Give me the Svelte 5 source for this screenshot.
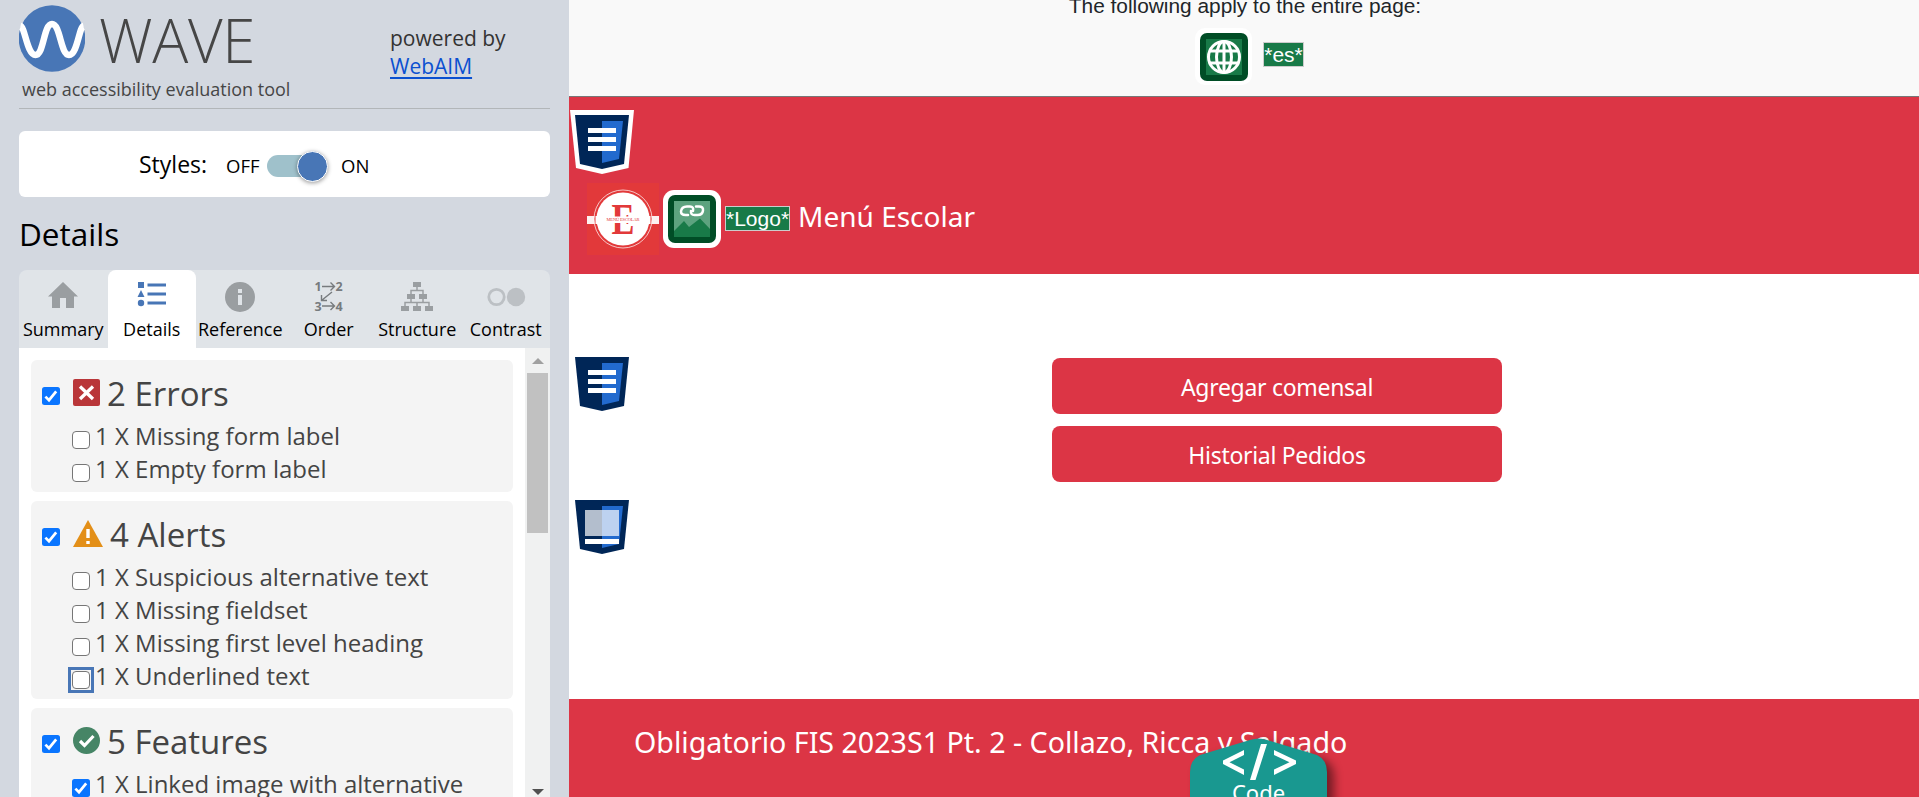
<script>
  const tabs = ['Summary', 'Details', 'Reference', 'Order', 'Structure', 'Contrast'];
  const groups = [
    { kind: 'error', title: '2 Errors', items: [{ t: '1 X Missing form label' }, { t: '1 X Empty form label' }] },
    {
      kind: 'alert',
      title: '4 Alerts',
      items: [
        { t: '1 X Suspicious alternative text' },
        { t: '1 X Missing fieldset' },
        { t: '1 X Missing first level heading' },
        { t: '1 X Underlined text', focus: true }
      ]
    },
    { kind: 'feature', title: '5 Features', items: [{ t: '1 X Linked image with alternative', on: true }] }
  ];
</script>

{#snippet check(on, focus)}
  <span class="box" class:on class:focus>
    {#if on}
      <svg viewBox="0 0 18 18" width="18" height="18"><path d="M3.4 9.6 7 13.2 14.2 4.4" fill="none" stroke="#fff" stroke-width="2.7" /></svg>
    {/if}
  </span>
{/snippet}

{#snippet shield(kind)}
  <svg viewBox="0 0 64 64" width="64" height="64">
    {#if kind === 'halo'}<path d="M0 0H64L58.500 58 32 64 6 58Z" fill="#fff" />{/if}
    <path d="M5 5H59L54 54 32 59 10 54Z" fill="#002657" />
    <path d="M32 11H53L49 49 32 53Z" fill="#226ace" />
    {#if kind === 'footer'}
      <path d="M15 15H49V41H15Z" fill="#fff" fill-opacity=".7" />
      <path d="M15 44H49V49H15Z" fill="#fff" />
    {:else}
      <path d="M18 18H46V23H18ZM18 27H46V32H18ZM18 36H46V41H18Z" fill="#fff" />
    {/if}
  </svg>
{/snippet}

<div class="app">
  <aside>
    <header>
      <div class="brand">
        <div class="mark">
          <svg viewBox="0 0 66 68" width="66" height="68">
            <circle cx="33" cy="33.500" r="33.300" fill="#4876b6" />
            <path d="M1.500 21C6 22 8 50 16.500 50S24.500 19 33 19 41.500 50 50 50 60 22 64.500 21" fill="none" stroke="#fff" stroke-width="6.500" />
          </svg>
          <span class="name">WAVE</span>
        </div>
        <div class="tag">web accessibility evaluation tool</div>
      </div>
      <div class="power">powered by<br /><a href="#top">WebAIM</a></div>
    </header>
    <section class="styles">
      <span class="lbl">Styles:</span>
      <span class="off">OFF</span>
      <span class="switch"><i></i></span>
      <span class="on-lbl">ON</span>
    </section>
    <h2>Details</h2>
    <nav>
      {#each tabs as tab}
        <div class="tab" class:active={tab === 'Details'}>
          <svg viewBox="0 0 40 36" width="40" height="36">
            {#if tab === 'Summary'}
              <path d="M20 4 35 18.500H31V30H23V20H17V30H9V18.500H5Z" fill="#9a9ea1" />
            {:else if tab === 'Details'}
              <g fill="#4876b6"><path d="M6 4H12V10H6ZM9 12 12.500 19H5.500Z" /><circle cx="9" cy="25" r="3.200" /><path d="M15.500 5.500H34V8.500H15.500ZM15.500 14.500H34V17.500H15.500ZM15.500 23.500H34V26.500H15.500Z" /></g>
            {:else if tab === 'Reference'}
              <circle cx="20" cy="19" r="15" fill="#9a9ea1" />
              <path d="M18 11H22V15H18ZM18 17H22V27H18Z" fill="#e0e4e8" />
            {:else if tab === 'Order'}
              <g fill="#777b7e" font-family="Open Sans" font-weight="700" font-size="12.500"><text x="5.500" y="13">1</text><text x="26.500" y="13">2</text><text x="5.500" y="32.500">3</text><text x="26.500" y="32.500">4</text></g>
              <path d="M13 8.500H25.500M21.500 4.500 25.500 8.500 21.500 12.500M23 14 12.500 22.500M12.500 17V22.500H18M13 28H25.500M21.500 24 25.500 28 21.500 32" fill="none" stroke="#777b7e" stroke-width="1.400" />
            {:else if tab === 'Structure'}
              <path d="M16 4H24V9H16ZM10 16H18V21H10ZM22 16H30V21H22ZM4 28H12V33H4ZM16 28H24V33H16ZM28 28H36V33H28Z" fill="#9a9ea1" />
              <path d="M20 9V12.500M14 17V12.500H26V17M14 21V24.500M26 21V24.500M8 29V24.500H32V29M20 29V24.500" fill="none" stroke="#9a9ea1" stroke-width="1.500" />
            {:else}
              <circle cx="10.500" cy="19" r="7.700" fill="none" stroke="#bcc0c4" stroke-width="2.800" /><circle cx="30" cy="19" r="9.200" fill="#bcc0c4" />
            {/if}
          </svg>
          <span>{tab}</span>
        </div>
      {/each}
    </nav>
    <div class="panel">
      <div class="list">
        {#each groups as g}
          <section class="group">
            <div class="head">
              {@render check(true)}
              <svg class="gi {g.kind}" viewBox="0 0 27 27" height="27" width="27">
                {#if g.kind === 'error'}
                  <rect width="27" height="27" rx="2" fill="#b93639" /><path d="M7 7.500 20 20M20 7.500 7 20" stroke="#fff" stroke-width="3.300" />
                {:else if g.kind === 'alert'}
                  <path d="M15 0 30 27H0Z" fill="#e38f18" /><path d="M13.300 9H16.700V18H13.300ZM13.300 21H16.700V24H13.300Z" fill="#fff" />
                {:else}
                  <circle cx="13.500" cy="13.500" r="13.500" fill="#468566" /><path d="M7 14 11.500 18.500 20.500 9" fill="none" stroke="#fff" stroke-width="3.200" />
                {/if}
              </svg>
              <h3>{g.title}</h3>
            </div>
            {#each g.items as it}
              <div class="item">{@render check(it.on, it.focus)}<span>{it.t}</span></div>
            {/each}
          </section>
        {/each}
      </div>
      <div class="scroll"><i class="up"></i><i class="thumb"></i><i class="down"></i></div>
    </div>
  </aside>

  <main>
    <div class="notice">
      <p>The following apply to the entire page:</p>
      <div class="lang">
        <svg viewBox="0 0 58 58" width="58" height="58">
          <rect width="57" height="57" rx="10" fill="#fff" /><rect x="5" y="5" width="48" height="48" rx="7" fill="#004d26" /><rect x="11" y="11" width="36" height="36" fill="#187a48" />
          <g fill="none" stroke="#fff" stroke-width="3"><circle cx="29" cy="29" r="15.500" /><ellipse cx="29" cy="29" rx="7.500" ry="15.500" /><path d="M29 13.500V44.500M15 23H43M15 35H43" /></g>
        </svg>
        <span class="alt">*es*</span>
      </div>
    </div>
    <div class="bar">
      <span class="pin first">{@render shield('halo')}</span>
      <svg class="logo" viewBox="0 0 72 72" width="72" height="72">
        <rect width="72" height="72" fill="#e2393a" />
        <path d="M0 33H72V41H0Z" fill="#fff" fill-opacity=".93" />
        <circle cx="36" cy="36" r="29" fill="#e2393a" stroke="#fff" stroke-opacity=".7" stroke-width="1" />
        <circle cx="36" cy="36" r="26.500" fill="#fff" />
        <path d="M8.500 33H63.500V41H8.500Z" fill="#fff" />
        <text x="36" y="50.500" text-anchor="middle" font-family="Liberation Serif" font-weight="700" font-size="44" textLength="23" lengthAdjust="spacingAndGlyphs" fill="#e2393a">E</text>
        <path d="M19 33.500H54V40H19Z" fill="#fff" />
        <text x="36" y="38.300" text-anchor="middle" font-family="Liberation Serif" font-size="4.500" textLength="33" fill="#e2393a">MENÚ ESCOLAR</text>
      </svg>
      <svg class="pic" viewBox="0 0 58 58" width="58" height="58">
        <rect width="58" height="58" rx="11" fill="#fff" /><rect x="5" y="5" width="48" height="48" rx="7" fill="#004d26" />
        <rect x="11" y="11" width="36" height="36" fill="#5da37f" />
        <path d="M11 41 21 31 26 37 37 28.500 47 39V47H11Z" fill="#187a48" />
        <path d="M25 25H22.500Q18 25 18 21.500 18.500 16.500 24 16.500H27Q31 16.500 30 21M33 16.500H36Q40.500 16.500 40 20.500 39.500 25 34.500 25H31.500Q27.500 25 28 21" fill="none" stroke="#fff" stroke-width="2.500" stroke-linecap="round" />
      </svg>
      <span class="alt">*Logo*</span>
      <span class="title">Menú Escolar</span>
    </div>
    <div class="content">
      <span class="pin second">{@render shield('plain')}</span>
      <span class="pin third">{@render shield('footer')}</span>
      <button class="b1">Agregar comensal</button>
      <button class="b2">Historial Pedidos</button>
    </div>
    <footer><span>Obligatorio FIS 2023S1 Pt. 2 - Collazo, Ricca y Salgado</span></footer>
    <div class="code">
      <svg viewBox="0 0 137 70" width="137" height="70">
        <path d="M0 70V34Q0 22 10 17L60 2Q68.500-1 77 2L127 17Q137 22 137 34V70Z" fill="#199890" />
        <path d="M54 12 33 22.500V26L54 37V31.500L39.500 24.200 54 17ZM71 6H77L65.500 42H60ZM84 12 106 22.500V26L84 37V31.500L99.500 24.200 84 17Z" fill="#fff" />
      </svg>
      <span>Code</span>
    </div>
  </main>
</div>

<style>
  :global(body) { margin: 0; overflow: hidden; }
  * { box-sizing: border-box; }
  .app { display: flex; width: 1919px; height: 797px; overflow: hidden; background: #fff; font-family: 'Open Sans', 'Noto Sans', sans-serif; }
  aside { width: 569px; height: 797px; padding: 0 19px; background: #d3d8e0; display: flex; flex-direction: column; flex: none; }
  header { height: 109px; border-bottom: 1px solid #b2b6b9; display: flex; flex: none; }
  .brand { width: 371px; padding-top: 5px; color: #464646; }
  .mark { display: flex; height: 68px; }
  .mark svg { display: block; }
  .name { font-weight: 300; font-size: 60px; line-height: 68px; margin: 1px 0 0 14px; letter-spacing: -0.3px; }
  .tag { font-size: 18px; line-height: 24px; margin: 4px 0 0 3px; white-space: nowrap; }
  .power { font-size: 21px; line-height: 28px; padding-top: 24px; color: #333; }
  a { color: #0b50d0; text-underline-offset: 3px; }
  .styles { margin-top: 22px; height: 66px; flex: none; background: #fff; border-radius: 6px; display: flex; align-items: center; padding-left: 120px; }
  .lbl { font-size: 23px; width: 87px; }
  .off, .on-lbl { font-size: 18.500px; padding-top: 2px; }
  .off { width: 41px; }
  .switch { width: 58px; height: 22px; border-radius: 11px; background: #9fc1cb; display: flex; justify-content: flex-end; align-items: center; margin-top: 4px; }
  .switch i { width: 31px; height: 31px; border-radius: 50%; background: #4876b6; border: 1px solid #fff; box-shadow: 0 1px 4px #0006; margin-right: -3px; flex: none; }
  .on-lbl { margin-left: 16px; }
  h2 { margin: 13px 0 0; height: 60px; line-height: 48px; font-size: 31.500px; font-weight: 400; }
  nav { display: flex; height: 78px; flex: none; background: #e0e4e8; border-radius: 8px 8px 0 0; }
  .tab { width: 88.500px; padding-top: 8px; display: flex; flex-direction: column; align-items: center; font-size: 18px; line-height: 30px; border-radius: 8px 8px 0 0; }
  .tab.active { background: #fff; }
  .panel { height: 449px; flex: none; background: #fff; display: flex; overflow: hidden; }
  .list { width: 506px; padding: 12px 12px 0; }
  .group { background: #f4f4f4; border-radius: 6px; margin-bottom: 9px; padding: 0 0 5px 11px; color: #444; }
  .head { display: flex; height: 61px; }
  .box { width: 18px; height: 18px; flex: none; border: 1.500px solid #767676; border-radius: 4px; background: #fff; display: block; }
  .box.on { border: 0; background: #0a75ff; border-radius: 2.500px; }
  .box.on svg { display: block; }
  .box.focus { position: relative; }
  .box.focus::after { content: ''; position: absolute; inset: -5px; border: 3px solid #4876b6; }
  .head .box { margin-top: 27px; }
  .gi { margin: 19px 0 0 13px; overflow: visible; }
  h3 { margin: 8px 0 0 7px; font-size: 33px; line-height: 51px; font-weight: 400; }
  .alert + h3 { margin-left: 10px; }
  .item { display: flex; height: 33px; padding-left: 30px; font-size: 24px; line-height: 30px; white-space: nowrap; }
  .item .box { margin: 10px 5px 0 0; }
  .scroll { width: 25px; height: 449px; background: #f0f1f1; padding: 10px 2px 2px; display: flex; flex-direction: column; align-items: center; }
  .up { border: 6px solid transparent; border-top: 0; border-bottom: 6px solid #a0a0a0; }
  .thumb { width: 21px; height: 160px; background: #c1c1c1; margin-top: 9px; }
  .down { margin-top: auto; border: 6px solid transparent; border-bottom: 0; border-top: 6px solid #505050; }

  main { position: relative; flex: 1; height: 797px; }
  .notice { height: 97px; background: #f9f9f9; border-bottom: 1px solid #777; text-align: center; overflow: hidden; font-family: 'Liberation Sans', Arial, sans-serif; color: #212529; }
  .notice p { margin: -7px 0 9px 2px; font-size: 20.850px; line-height: 26px; }
  .lang { display: flex; justify-content: center; gap: 10px; padding-left: 11px; }
  .alt { font: 21px/23px 'Liberation Sans', Arial, sans-serif; height: 25px; border: 1px solid #ccc; background: #187a48; color: #fff; }
  .lang .alt { margin-top: 14px; }
  .bar { height: 177px; background: #dc3545; display: flex; padding: 86px 0 0 18px; position: relative; }
  .pin { position: absolute; left: 1px; z-index: 2; }
  .pin svg { display: block; }
  .first { top: 13px; }
  .second { top: 78px; }
  .third { top: 221px; }
  .pic { margin: 7px 4px 0; }
  .bar .alt { margin-top: 23px; }
  .title, .content, footer, .code { font-family: 'Noto Sans', 'Open Sans', sans-serif; color: #fff; }
  .title { margin: 16px 0 0 8px; font-size: 28px; line-height: 34px; }
  .content { position: relative; height: 425px; padding: 84px 0 0 483px; display: flex; flex-direction: column; gap: 12px; }
  button { width: 450px; height: 56px; padding: 2px 0 0; border: 0; border-radius: 8px; background: #dc3545; color: #fff; font: 23px 'Noto Sans', sans-serif; letter-spacing: -0.3px; }
  footer { height: 98px; background: #dc3545; font-size: 28.600px; line-height: 38px; padding: 24px 0 0 65px; white-space: nowrap; }
  .code { position: absolute; left: 621px; top: 738px; width: 137px; height: 59px; text-align: center; font-size: 22px; }
  .code svg { display: block; filter: drop-shadow(7px 5px 5px #0007); }
  .code span { position: absolute; left: 0; right: 0; top: 39px; line-height: 30px; }
</style>
